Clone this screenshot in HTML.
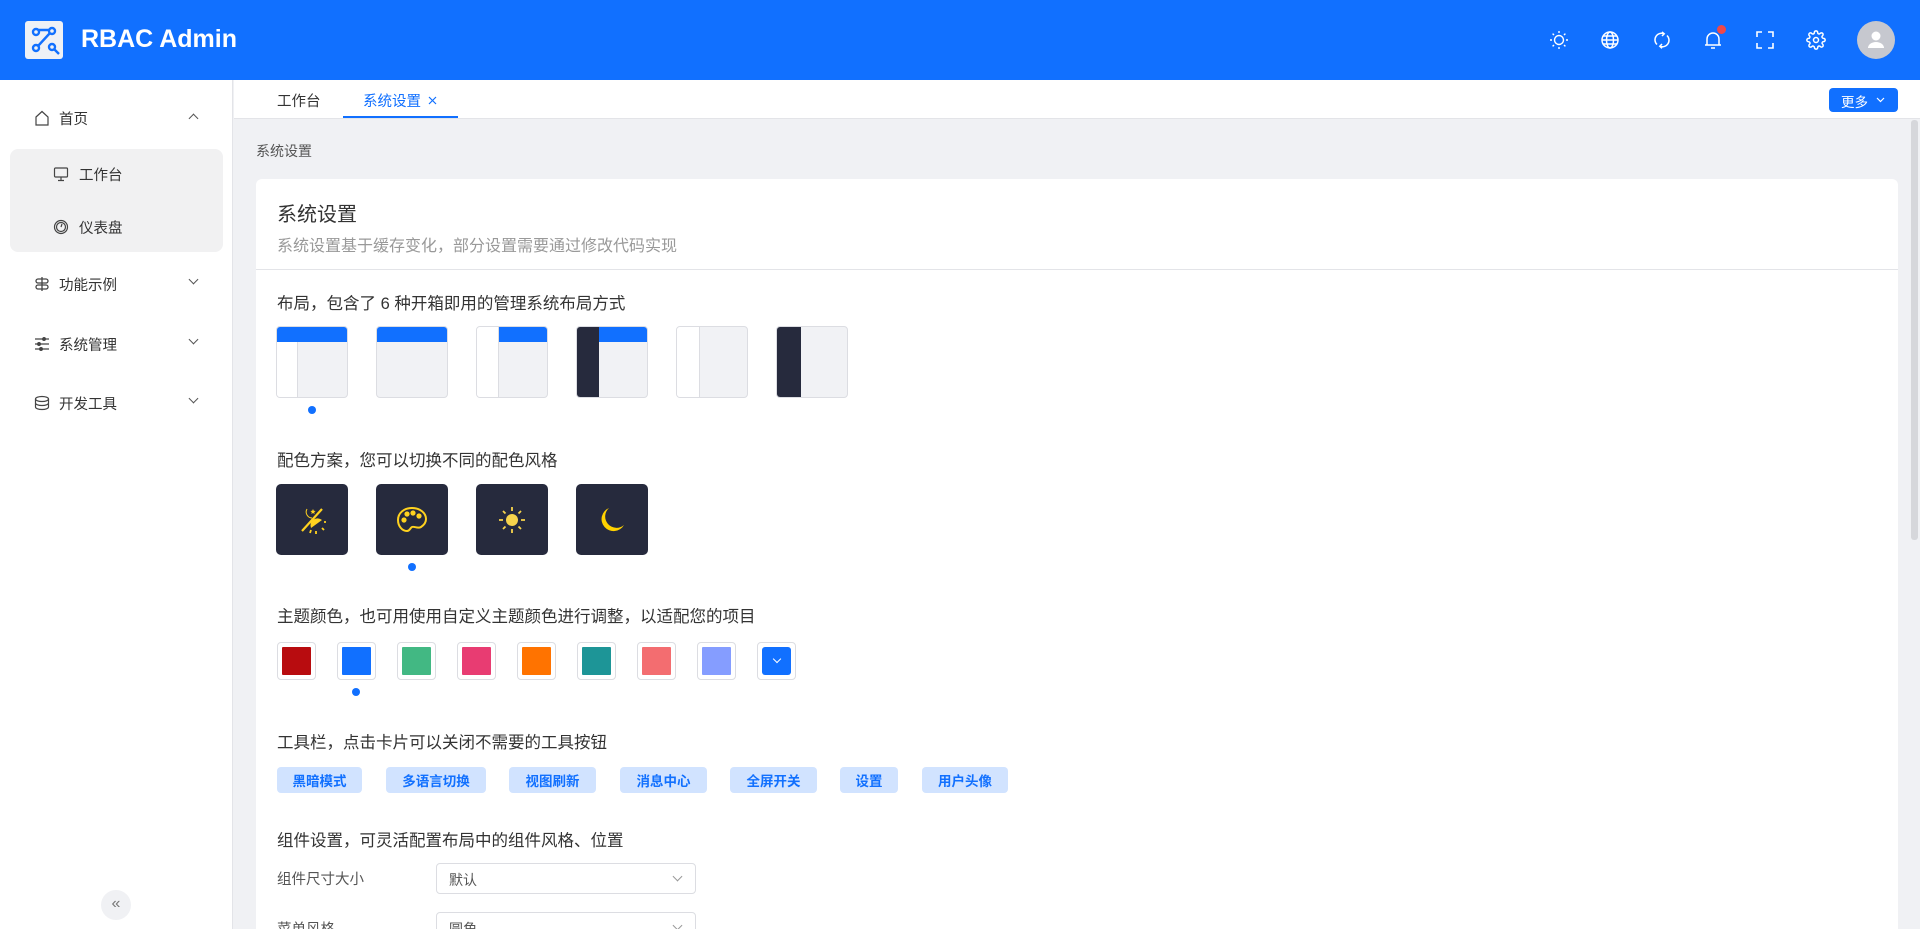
<!DOCTYPE html>
<html><head><meta charset="utf-8"><style>
*{box-sizing:border-box;margin:0;padding:0}
html{overflow:hidden}
body{width:1920px;height:929px;overflow:hidden;background:#f0f1f4;font-family:"Liberation Sans","Noto Sans CJK SC",sans-serif;color:#333;position:relative}
.a{position:absolute}
.hdr{left:0;top:0;width:1920px;height:80px;background:#1170ff}
.side{left:0;top:80px;width:233px;height:849px;background:#fff;border-right:1px solid #e3e4e8}
.mi{position:absolute;left:0;width:233px;height:20px;font-size:14.5px;color:#333}
.mi svg{position:absolute;left:34px;top:2px}
.mi span{position:absolute;left:59px;top:0}
.mi i{position:absolute;left:190px;top:2px;width:7px;height:7px;border-right:1.3px solid #555;border-bottom:1.3px solid #555;transform:rotate(45deg)}
.tabs{left:234px;top:80px;width:1686px;height:39px;background:#fff;border-bottom:1px solid #e3e4e8}
.lbl{position:absolute;left:277px;font-size:16.5px;color:#333}
.lay{position:absolute;top:326px;width:72px;height:72px;border:1px solid #dcdde2;border-radius:4px;background:#f1f2f5;overflow:hidden}
.dk{position:absolute;top:484px;width:72px;height:71px;border-radius:5px;background:#262a3d;display:flex;align-items:center;justify-content:center}
.dot{position:absolute;width:8px;height:8px;border-radius:50%;background:#1170ff}
.sw{position:absolute;top:642px;width:39px;height:38px;border:1px solid #dcdde2;border-radius:4px;background:#fff;padding:4px}
.sw div{width:100%;height:100%;border-radius:1px}
.tag{position:absolute;top:767px;height:26px;background:#d1e3ff;color:#1170ff;font-weight:bold;font-size:13.5px;border-radius:4px;display:flex;align-items:center;justify-content:center}
.sel{position:absolute;left:436px;width:260px;height:31px;border:1px solid #dcdde2;border-radius:4px;background:#fff;font-size:14px;color:#555;padding:6px 12px}
.sel i{position:absolute;right:14px;top:9px;width:7px;height:7px;border-right:1.2px solid #999;border-bottom:1.2px solid #999;transform:rotate(45deg)}
</style></head><body>
<div class="a hdr">
 <div class="a" style="left:25px;top:21px;width:38px;height:38px;background:#eef1f6;border-radius:3px">
  <svg width="38" height="38" viewBox="0 0 38 38" fill="none" stroke="#1170ff" stroke-width="2.4"><circle cx="11" cy="11" r="3"/><circle cx="27" cy="10" r="3"/><circle cx="11" cy="27" r="3"/><circle cx="27" cy="26" r="3"/><path d="M13 9l12-0M13 25l12-13M29 28l5 5"/></svg>
 </div>
 <div class="a" style="left:81px;top:25px;color:#fff;font-size:25px;font-weight:bold">RBAC Admin</div>
 <svg class="a" style="left:1549px;top:30px" width="20" height="20" viewBox="0 0 20 20" fill="none" stroke="#fff" stroke-width="1.4"><circle cx="10" cy="10" r="4.5"/><path d="M10 1v2M10 17v2M1 10h2M17 10h2M3.6 3.6l1.4 1.4M15 15l1.4 1.4M3.6 16.4L5 15M15 5l1.4-1.4"/></svg>
 <svg class="a" style="left:1600px;top:30px" width="20" height="20" viewBox="0 0 20 20" fill="none" stroke="#fff" stroke-width="1.5"><circle cx="10" cy="10" r="8"/><ellipse cx="10" cy="10" rx="3.5" ry="8"/><path d="M2 10h16M3 6h14M3 14h14"/></svg>
 <svg class="a" style="left:1652px;top:30px" width="20" height="20" viewBox="0 0 20 20" fill="none" stroke="#fff" stroke-width="1.5"><path d="M5 14.5A6.5 6.5 0 0 1 12 3.8M15 5.5A6.5 6.5 0 0 1 8 16.2"/><path d="M10 2l2.2 1.8L10 6M10 14l-2.2 2.2L10 18.3"/></svg>
 <svg class="a" style="left:1703px;top:29px" width="20" height="22" viewBox="0 0 20 22" fill="none" stroke="#fff" stroke-width="1.5"><path d="M4 16V10a6 6 0 0 1 12 0v6h2H2zM8 19h4"/></svg>
 <div class="a" style="left:1717px;top:25px;width:9px;height:9px;border-radius:50%;background:#f04848"></div>
 <svg class="a" style="left:1756px;top:31px" width="18" height="18" viewBox="0 0 18 18" fill="none" stroke="#fff" stroke-width="1.6"><path d="M1 6V1h5M12 1h5v5M17 12v5h-5M6 17H1v-5"/></svg>
 <svg class="a" style="left:1806px;top:30px" width="20" height="20" viewBox="0 0 24 24" fill="none" stroke="#fff" stroke-width="1.8"><circle cx="12" cy="12" r="3"/><path d="M19.4 15a1.7 1.7 0 0 0 .3 1.8l.1.1a2 2 0 1 1-2.8 2.8l-.1-.1a1.7 1.7 0 0 0-1.8-.3 1.7 1.7 0 0 0-1 1.5V21a2 2 0 1 1-4 0v-.1a1.7 1.7 0 0 0-1.1-1.5 1.7 1.7 0 0 0-1.8.3l-.1.1a2 2 0 1 1-2.8-2.8l.1-.1a1.7 1.7 0 0 0 .3-1.800 1.7 1.7 0 0 0-1.5-1H3a2 2 0 1 1 0-4h.1a1.7 1.7 0 0 0 1.5-1.1 1.7 1.7 0 0 0-.3-1.8l-.1-.1a2 2 0 1 1 2.8-2.8l.1.1a1.7 1.7 0 0 0 1.8.3H9a1.7 1.7 0 0 0 1-1.5V3a2 2 0 1 1 4 0v.1a1.7 1.7 0 0 0 1 1.5 1.7 1.7 0 0 0 1.8-.3l.1-.1a2 2 0 1 1 2.8 2.8l-.1.1a1.7 1.7 0 0 0-.3 1.8V9a1.7 1.7 0 0 0 1.5 1H21a2 2 0 1 1 0 4h-.1a1.7 1.7 0 0 0-1.5 1z"/></svg>
 <div class="a" style="left:1857px;top:21px;width:38px;height:38px;border-radius:50%;background:#c6c8cf">
  <svg width="38" height="38" viewBox="0 0 38 38" fill="#fff"><circle cx="19" cy="15" r="4.5"/><path d="M11 27a8 6 0 0 1 16 0z"/></svg>
 </div>
</div>

<div class="a side">
 <div class="mi" style="top:28px"><svg width="16" height="16" viewBox="0 0 16 16" fill="none" stroke="#444" stroke-width="1.2"><path d="M2 7L8 1.5 14 7v8H2z"/></svg><span>首页</span><i style="transform:rotate(-135deg);top:7px"></i></div>
 <div class="a" style="left:10px;top:69px;width:213px;height:103px;background:#f1f1f2;border-radius:8px"></div>
 <div class="mi" style="top:84px"><svg style="left:53px" width="16" height="16" viewBox="0 0 16 16" fill="none" stroke="#444" stroke-width="1.2"><rect x="1.5" y="2" width="13" height="9" rx="1"/><path d="M8 11v3M5 14.5h6"/></svg><span style="left:79px">工作台</span></div>
 <div class="mi" style="top:137px"><svg style="left:53px" width="16" height="16" viewBox="0 0 16 16" fill="none" stroke="#444" stroke-width="1.2"><circle cx="8" cy="8" r="6.5"/><circle cx="8" cy="8" r="4.5"/><path d="M8 8l1-3"/></svg><span style="left:79px">仪表盘</span></div>
 <div class="mi" style="top:194px"><svg width="16" height="16" viewBox="0 0 16 16" fill="none" stroke="#444" stroke-width="1.3"><rect x="2" y="3" width="12" height="4" rx="2"/><rect x="2" y="9" width="12" height="4" rx="2"/><path d="M8 1v14"/></svg><span>功能示例</span><i></i></div>
 <div class="mi" style="top:254px"><svg width="16" height="16" viewBox="0 0 16 16" fill="none" stroke="#444" stroke-width="1.3"><path d="M1 3h14M1 8h14M1 13h14"/><circle cx="10" cy="3" r="1.3" fill="#444"/><circle cx="5" cy="8" r="1.3" fill="#444"/><circle cx="7" cy="13" r="1.3" fill="#444"/></svg><span>系统管理</span><i></i></div>
 <div class="mi" style="top:313px"><svg width="16" height="16" viewBox="0 0 16 16" fill="none" stroke="#444" stroke-width="1.2"><ellipse cx="8" cy="4" rx="6.5" ry="2.5"/><path d="M1.5 4v8c0 1.4 2.9 2.5 6.5 2.5s6.5-1.1 6.5-2.5V4M1.5 8c0 1.4 2.9 2.5 6.5 2.5s6.5-1.1 6.5-2.5"/></svg><span>开发工具</span><i></i></div>
 <div class="a" style="left:101px;top:810px;width:30px;height:30px;border-radius:50%;background:#f0f1f4;color:#777;font-size:16px;text-align:center;line-height:28px">«</div>
</div>

<div class="a tabs">
 <div class="a" style="left:43px;top:10px;font-size:14.5px;color:#333">工作台</div>
 <div class="a" style="left:129px;top:10px;font-size:14.5px;color:#1170ff">系统设置</div>
 <svg class="a" style="left:194px;top:16px" width="9" height="9" viewBox="0 0 9 9" stroke="#1170ff" stroke-width="1.2"><path d="M1 1l7 7M8 1L1 8"/></svg>
 <div class="a" style="left:109px;top:36px;width:115px;height:2px;background:#1170ff"></div>
 <div class="a" style="left:1595px;top:8px;width:69px;height:24px;background:#1170ff;border-radius:4px;color:#fff;font-size:13.5px;padding:3px 0 0 12px">更多</div>
 <svg class="a" style="left:1642px;top:17px" width="9" height="6" viewBox="0 0 9 6" fill="none" stroke="#fff" stroke-width="1.2"><path d="M1 1l3.5 3.5L8 1"/></svg>
</div>
<div class="a" style="left:1911px;top:120px;width:7px;height:420px;background:#d6d7db;border-radius:3px"></div>

<div class="a" style="left:256px;top:141px;font-size:14px;color:#555">系统设置</div>
<div class="a" style="left:256px;top:179px;width:1642px;height:750px;background:#fff;border-radius:6px 6px 0 0"></div>
<div class="a" style="left:277px;top:198px;font-size:20px;color:#333">系统设置</div>
<div class="a" style="left:277px;top:232px;font-size:16px;color:#999">系统设置基于缓存变化，部分设置需要通过修改代码实现</div>
<div class="a" style="left:256px;top:269px;width:1642px;height:1px;background:#e3e4e8"></div>

<div class="lbl" style="top:290px">布局，包含了 6 种开箱即用的管理系统布局方式</div>
<div class="lay" style="left:276px"><div class="a" style="left:0;top:0;width:72px;height:15px;background:#1170ff"></div><div class="a" style="left:0;top:15px;width:21px;height:57px;background:#fff;border-right:1px solid #dcdde2"></div></div>
<div class="lay" style="left:376px"><div class="a" style="left:0;top:0;width:72px;height:15px;background:#1170ff"></div></div>
<div class="lay" style="left:476px"><div class="a" style="left:0;top:0;width:22px;height:72px;background:#fff;border-right:1px solid #dcdde2"></div><div class="a" style="left:22px;top:0;width:50px;height:15px;background:#1170ff"></div></div>
<div class="lay" style="left:576px"><div class="a" style="left:0;top:0;width:22px;height:72px;background:#262a3d"></div><div class="a" style="left:22px;top:0;width:50px;height:15px;background:#1170ff"></div></div>
<div class="lay" style="left:676px"><div class="a" style="left:0;top:0;width:23px;height:72px;background:#fff;border-right:1px solid #dcdde2"></div></div>
<div class="lay" style="left:776px"><div class="a" style="left:0;top:0;width:24px;height:72px;background:#262a3d"></div></div>
<div class="dot" style="left:308px;top:406px"></div>

<div class="lbl" style="top:447px">配色方案，您可以切换不同的配色风格</div>
<div class="dk" style="left:276px"><svg width="30" height="30" viewBox="0 0 30 30" fill="#ffd21f" stroke="#ffd21f"><path d="M5 26L25 4" stroke-width="2.2"/><path d="M10 4a6 6 0 0 0 5 9 6 6 0 0 1-5-9z" stroke-width="1"/><path d="M16 4l.8 1.8 1.8.2-1.4 1.2.5 1.8-1.7-1-1.7 1 .5-1.8-1.4-1.2 1.8-.2z" stroke-width="0"/><path d="M14 23a7 7 0 0 1 11-8z" stroke-width="0"/><path d="M27 17h2M25 23l2 2M19 26l0 3M14 25l-1 3" stroke-width="1.8"/></svg></div>
<div class="dk" style="left:376px"><svg width="34" height="30" viewBox="0 0 34 30" fill="none" stroke="#ffd21f" stroke-width="2"><path d="M17 3C9 3 3 8 3 15c0 6 4 11 9 11 3 0 3-3 5-4s6 2 9 0 5-5 5-8C31 8 25 3 17 3z"/><circle cx="9" cy="15" r="1.6" fill="#ffd21f"/><circle cx="12" cy="9" r="1.6" fill="#ffd21f"/><circle cx="18" cy="8" r="1.6" fill="#ffd21f"/><circle cx="24" cy="11" r="1.6" fill="#ffd21f"/></svg></div>
<div class="dk" style="left:476px"><svg width="30" height="30" viewBox="0 0 30 30" fill="#f7d44c" stroke="#f7d44c" stroke-width="1.8"><circle cx="15" cy="15" r="6" stroke-width="0"/><path d="M15 2v4M15 24v4M2 15h4M24 15h4M6 6l2.5 2.5M21.5 21.5L24 24M6 24l2.5-2.5M21.5 8.5L24 6"/></svg></div>
<div class="dk" style="left:576px"><svg width="30" height="30" viewBox="0 0 30 30" fill="#ffd200"><path d="M12 3A12 12 0 1 0 27 20 10 10 0 0 1 12 3z"/></svg></div>
<div class="dot" style="left:408px;top:563px"></div>

<div class="lbl" style="top:603px">主题颜色，也可用使用自定义主题颜色进行调整，以适配您的项目</div>
<div class="sw" style="left:277px"><div style="background:#b80c0f"></div></div>
<div class="sw" style="left:337px"><div style="background:#1170ff"></div></div>
<div class="sw" style="left:397px"><div style="background:#42b883"></div></div>
<div class="sw" style="left:457px"><div style="background:#e83c72"></div></div>
<div class="sw" style="left:517px"><div style="background:#ff7300"></div></div>
<div class="sw" style="left:577px"><div style="background:#1d9597"></div></div>
<div class="sw" style="left:637px"><div style="background:#f36d70"></div></div>
<div class="sw" style="left:697px"><div style="background:#859dff"></div></div>
<div class="sw" style="left:757px"><div style="background:#1170ff;border-radius:3px;position:relative"><span style="position:absolute;left:12px;top:9px;width:6px;height:6px;border-right:1px solid #fff;border-bottom:1px solid #fff;transform:rotate(45deg)"></span></div></div>
<div class="dot" style="left:352px;top:688px"></div>

<div class="lbl" style="top:729px">工具栏，点击卡片可以关闭不需要的工具按钮</div>
<div class="tag" style="left:277px;width:85px">黑暗模式</div>
<div class="tag" style="left:386px;width:100px">多语言切换</div>
<div class="tag" style="left:509px;width:87px">视图刷新</div>
<div class="tag" style="left:620px;width:87px">消息中心</div>
<div class="tag" style="left:730px;width:87px">全屏开关</div>
<div class="tag" style="left:840px;width:58px">设置</div>
<div class="tag" style="left:922px;width:86px">用户头像</div>

<div class="lbl" style="top:827px">组件设置，可灵活配置布局中的组件风格、位置</div>
<div class="a" style="left:277px;top:868px;font-size:14.5px;color:#555">组件尺寸大小</div>
<div class="sel" style="top:863px">默认<i></i></div>
<div class="a" style="left:277px;top:918px;font-size:14.5px;color:#555">菜单风格</div>
<div class="sel" style="top:912px">圆角<i></i></div>
</body></html>
